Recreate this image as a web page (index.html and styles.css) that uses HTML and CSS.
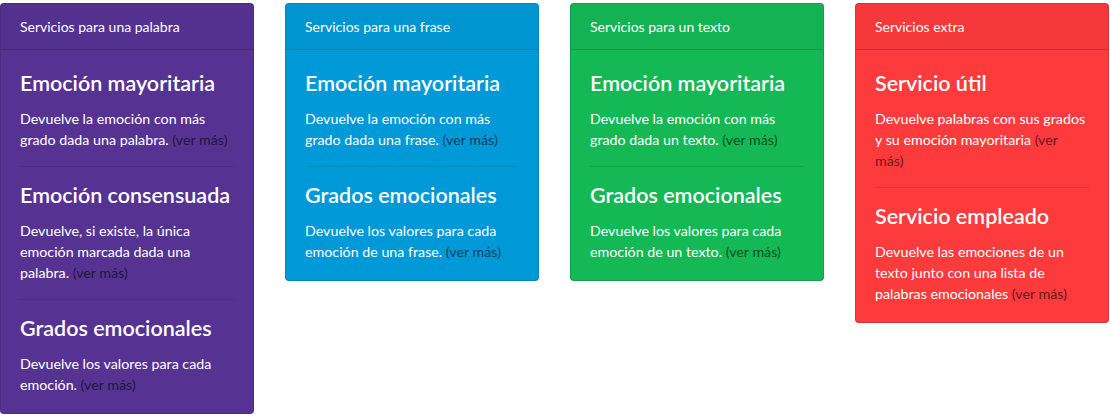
FILE: index.html
```html
<!DOCTYPE html>
<html lang="es">
<head>
<meta charset="utf-8">
<title>Servicios</title>
<link rel="stylesheet" href="styles.css">
</head>
<body>
<div class="deck">
  <div class="card card-purple">
    <div class="card-header">Servicios para una palabra</div>
    <div class="card-body">
      <h4 class="card-title">Emoción mayoritaria</h4>
      <p class="card-text">Devuelve la emoción con más grado dada una palabra. <a class="more" href="#">(ver más)</a></p>
      <hr>
      <h4 class="card-title">Emoción consensuada</h4>
      <p class="card-text">Devuelve, si existe, la única emoción marcada dada una palabra. <a class="more" href="#">(ver más)</a></p>
      <hr>
      <h4 class="card-title">Grados emocionales</h4>
      <p class="card-text">Devuelve los valores para cada emoción. <a class="more" href="#">(ver más)</a></p>
    </div>
  </div>
  <div class="card card-blue">
    <div class="card-header">Servicios para una frase</div>
    <div class="card-body">
      <h4 class="card-title">Emoción mayoritaria</h4>
      <p class="card-text">Devuelve la emoción con más grado dada una frase. <a class="more" href="#">(ver más)</a></p>
      <hr>
      <h4 class="card-title">Grados emocionales</h4>
      <p class="card-text">Devuelve los valores para cada emoción de una frase. <a class="more" href="#">(ver más)</a></p>
    </div>
  </div>
  <div class="card card-green">
    <div class="card-header">Servicios para un texto</div>
    <div class="card-body">
      <h4 class="card-title">Emoción mayoritaria</h4>
      <p class="card-text">Devuelve la emoción con más grado dada un texto. <a class="more" href="#">(ver más)</a></p>
      <hr>
      <h4 class="card-title">Grados emocionales</h4>
      <p class="card-text">Devuelve los valores para cada emoción de un texto. <a class="more" href="#">(ver más)</a></p>
    </div>
  </div>
  <div class="card card-red">
    <div class="card-header">Servicios extra</div>
    <div class="card-body">
      <h4 class="card-title">Servicio útil</h4>
      <p class="card-text">Devuelve palabras con sus grados y su emoción mayoritaria <a class="more" href="#">(ver más)</a></p>
      <hr>
      <h4 class="card-title">Servicio empleado</h4>
      <p class="card-text">Devuelve las emociones de un texto junto con una lista de palabras emocionales <a class="more" href="#">(ver más)</a></p>
    </div>
  </div>
</div>
</body>
</html>
```
FILE: styles.css
```css
html, body {
  margin: 0;
  padding: 0;
  background: #ffffff;
}

body {
  font-family: "Lato", "Open Sans", "Liberation Sans", sans-serif;
  font-size: 14.25px;
  color: #ffffff;
}

.deck {
  display: flex;
  align-items: flex-start;
  gap: 31px;
  padding-top: 3px;
}

.card {
  width: 254px;
  flex: 0 0 254px;
  border: 1px solid rgba(0, 0, 0, 0.125);
  border-radius: 4px;
  box-sizing: border-box;
  overflow: hidden;
}

.card-purple { background: #563393; }
.card-blue { background: #0099d7; }
.card-green { background: #14b855; }
.card-red { background: #fd3a3c; }

.card-header {
  padding: 12px 19px;
  line-height: 21px;
  font-size: 14px;
  background: rgba(0, 0, 0, 0.03);
  border-bottom: 1px solid rgba(0, 0, 0, 0.125);
}

.card-body {
  padding: 21px 19px 18px;
}

.card-title {
  margin: 0 0 12px;
  font-size: 21.5px;
  line-height: 25px;
  font-weight: 600;
}

.card-text {
  margin: 0;
  line-height: 21px;
}

.more {
  color: rgba(0, 0, 0, 0.62);
  text-decoration: none;
}

hr {
  margin: 16px 0;
  border: 0;
  border-top: 1px solid rgba(0, 0, 0, 0.1);
  height: 0;
}
```
